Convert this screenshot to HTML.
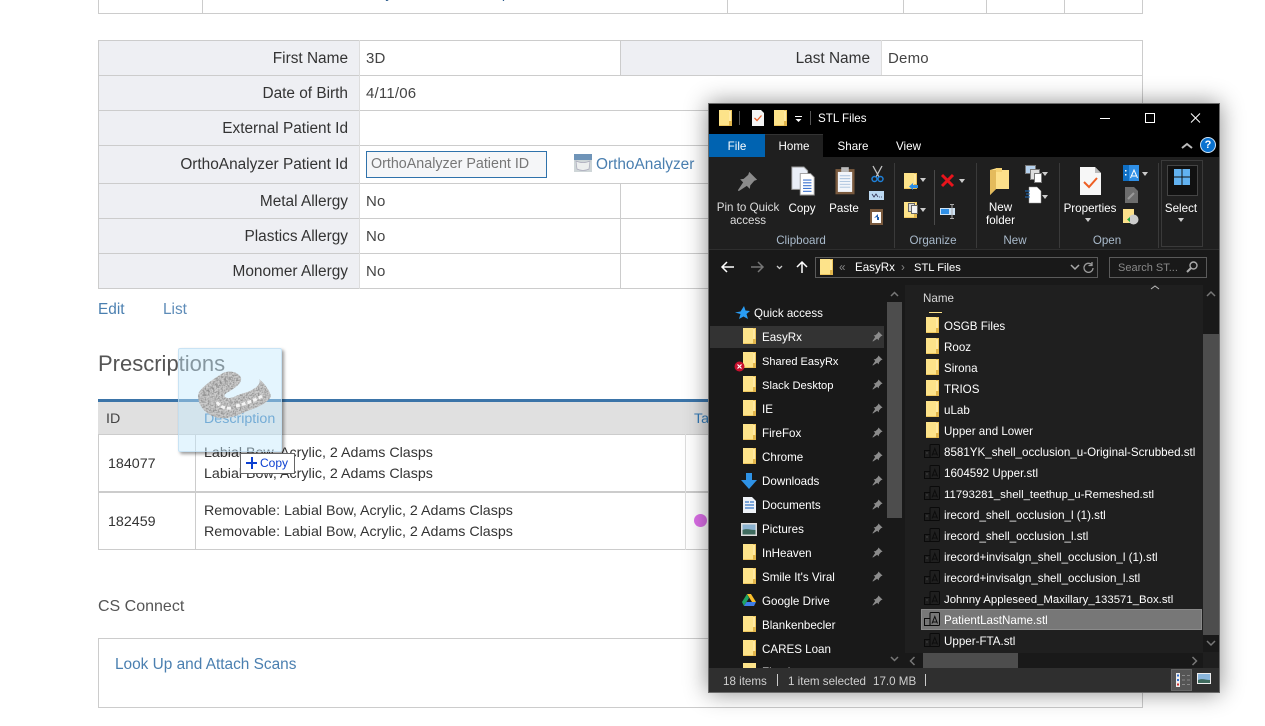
<!DOCTYPE html>
<html><head><meta charset="utf-8"><title>Patient</title>
<style>
html,body{margin:0;padding:0;background:#fff;overflow:hidden}
body{width:1265px;height:726px;position:relative;font-family:"Liberation Sans",sans-serif;color:#333}
#p>div,#w>div{position:absolute}
.b{background:#ccc}
.l{font-size:15.4px;line-height:20px;height:20px;text-align:right;width:340px;left:8px;white-space:nowrap}
.v{font-size:15px;line-height:20px;height:20px;white-space:nowrap;color:#444;letter-spacing:.2px}
.d{font-size:14.26px;line-height:20px;height:20px;white-space:nowrap;color:#333}
.a{color:#337ab7}
#w{position:absolute;left:708px;top:103px;width:512px;height:590px;background:#000;box-shadow:0 0 22px rgba(0,0,0,.45);outline:1px solid #6b6b6b;outline-offset:-1px;font-size:11.6px;color:#fff;overflow:hidden}
#w>div{white-space:nowrap;line-height:16px;height:16px}
#w svg{position:absolute;overflow:visible}
#w svg.pn{left:164px}
.c{text-align:center}
.g{color:#a9bacb;text-align:center;margin-top:1px}
.n{left:54px;margin-top:1px}
.m{margin-top:1px}
.f{left:236px;margin-top:1px}
</style></head><body>
<svg width="0" height="0" style="position:absolute">
<defs>
<symbol id="fo" viewBox="0 0 13 16"><rect width="13" height="16" fill="#efc75e"/><rect x="1" y="1" width="11" height="14" fill="#ffe9a3"/><rect x="0" y="0" width="10" height="15" fill="#fde38a"/><rect x="10" y="11" width="3" height="5" fill="#e2b64c"/></symbol>
<symbol id="pi" viewBox="0 0 12 12"><path d="M7 0.5l4.500 4.500-1.600.6-2.300 2.600-.3 2-1.700-1.700L1 11.500l-.5-.5 3-4.500-1.700-1.700 2-.3 2.600-2.300z" fill="#8b8b8b"/></symbol>
<symbol id="st" viewBox="0 0 16 14"><rect x=".5" y="6.500" width="5.500" height="7" fill="none" stroke="#0a0a0a"/><rect x="6" y=".5" width="9.500" height="13" rx="1" fill="none" stroke="#0a0a0a"/><path d="M8 11.500L10.800 4.500 13.500 11.500M9 10h3.600" fill="none" stroke="#0c0c0c"/><rect x="2.500" y="8.500" width="1" height="1" fill="#666"/></symbol>
<filter id="nz" x="0" y="0" width="100%" height="100%"><feTurbulence type="fractalNoise" baseFrequency="0.6" numOctaves="2" seed="4"/><feColorMatrix values="0 0 0 0 .3 0 0 0 0 .3 0 0 0 0 .3 3 0 0 0 -1.100"/><feComposite in2="SourceGraphic" operator="in"/><feMerge><feMergeNode in="SourceGraphic"/><feMergeNode/></feMerge></filter>
</defs></svg>

<div id="p">
<!-- top table -->
<div class="b" style="left:98px;top:13px;width:1045px;height:1px"></div>
<div class="b" style="left:98px;top:0;width:1px;height:13px"></div>
<div class="b" style="left:202px;top:0;width:1px;height:13px"></div>
<div class="b" style="left:727px;top:0;width:1px;height:13px"></div>
<div class="b" style="left:903px;top:0;width:1px;height:13px"></div>
<div class="b" style="left:986px;top:0;width:1px;height:13px"></div>
<div class="b" style="left:1064px;top:0;width:1px;height:13px"></div>
<div class="b" style="left:1142px;top:0;width:1px;height:13px"></div>
<div class="d" style="left:288px;top:-16px;color:#2f5f8f">Labial Bow, Acrylic, 2 Adams Clasps</div>

<!-- details table -->
<div style="left:99px;top:41px;width:260px;height:247px;background:#eeeff3"></div>
<div style="left:621px;top:41px;width:260px;height:34px;background:#eeeff3"></div>
<div class="b" style="left:98px;top:40px;width:1045px;height:1px"></div>
<div class="b" style="left:98px;top:75px;width:1045px;height:1px"></div>
<div class="b" style="left:98px;top:110px;width:1045px;height:1px"></div>
<div class="b" style="left:98px;top:145px;width:1045px;height:1px"></div>
<div class="b" style="left:98px;top:183px;width:1045px;height:1px"></div>
<div class="b" style="left:98px;top:218px;width:1045px;height:1px"></div>
<div class="b" style="left:98px;top:253px;width:1045px;height:1px"></div>
<div class="b" style="left:98px;top:288px;width:1045px;height:1px"></div>
<div class="b" style="left:98px;top:40px;width:1px;height:249px"></div>
<div class="b" style="left:359px;top:40px;width:1px;height:249px;background:#ddd"></div>
<div class="b" style="left:620px;top:40px;width:1px;height:35px"></div>
<div class="b" style="left:620px;top:183px;width:1px;height:105px"></div>
<div class="b" style="left:881px;top:40px;width:1px;height:35px;background:#ddd"></div>
<div class="b" style="left:1142px;top:40px;width:1px;height:249px"></div>

<div class="l" style="top:49px">First Name</div>
<div class="l" style="top:84px">Date of Birth</div>
<div class="l" style="top:119px">External Patient Id</div>
<div class="l" style="top:155px">OrthoAnalyzer Patient Id</div>
<div class="l" style="top:192px">Metal Allergy</div>
<div class="l" style="top:227px">Plastics Allergy</div>
<div class="l" style="top:262px">Monomer Allergy</div>
<div class="l" style="top:49px;left:530px">Last Name</div>
<div class="v" style="left:366px;top:49px">3D</div>
<div class="v" style="left:888px;top:49px">Demo</div>
<div class="v" style="left:366px;top:84px">4/11/06</div>
<div class="v" style="left:366px;top:192px">No</div>
<div class="v" style="left:366px;top:227px">No</div>
<div class="v" style="left:366px;top:262px">No</div>

<div style="left:366px;top:151px;width:179px;height:25px;border:1px solid #2f72ab;background:#f5f6f8;color:#777;font-size:14.3px;line-height:25px;text-indent:4px;white-space:nowrap">OrthoAnalyzer Patient ID</div>
<svg style="position:absolute;left:574px;top:154px" width="18" height="18" viewBox="0 0 18 18"><rect width="18" height="18" fill="#cfd6d8"/><rect width="18" height="6" fill="#6f94b8"/><path d="M2 7c4 2 10 2 14 0l-1 8c-4 2-8 2-12 0z" fill="#eceeee" stroke="#aab" stroke-width=".7"/></svg>
<div class="a" style="left:596px;top:155px;font-size:15.4px;line-height:20px;white-space:nowrap;color:#4a7fb0">OrthoAnalyzer</div>

<div class="a" style="left:98px;top:300px;font-size:15.4px;line-height:20px;color:#4a7fb0">Edit</div>
<div class="a" style="left:163px;top:300px;font-size:15.4px;line-height:20px;color:#5e8cb8">List</div>

<div style="left:98px;top:350px;font-size:22px;line-height:28px;color:#555;white-space:nowrap">Prescriptions</div>

<!-- prescriptions -->
<div style="left:98px;top:399px;width:612px;height:3px;background:#3b74a8"></div>
<div style="left:98px;top:402px;width:612px;height:32px;background:#e0e0e0"></div>
<div class="d" style="left:106px;top:409px;color:#444">ID</div>
<div class="d a" style="left:204px;top:409px">Description</div>
<div class="d a" style="left:694px;top:409px">Ta</div>
<div class="b" style="left:98px;top:434px;width:612px;height:1px"></div>
<div class="b" style="left:98px;top:491px;width:612px;height:2px"></div>
<div class="b" style="left:98px;top:549px;width:612px;height:1px"></div>
<div class="b" style="left:98px;top:434px;width:1px;height:116px"></div>
<div class="b" style="left:195px;top:434px;width:1px;height:116px"></div>
<div class="b" style="left:685px;top:434px;width:1px;height:116px;background:#ddd"></div>
<div class="d" style="left:108px;top:454px">184077</div>
<div class="d" style="left:204px;top:443px">Labial Bow, Acrylic, 2 Adams Clasps</div>
<div class="d" style="left:204px;top:464px">Labial Bow, Acrylic, 2 Adams Clasps</div>
<div class="d" style="left:108px;top:512px">182459</div>
<div class="d" style="left:204px;top:501px">Removable: Labial Bow, Acrylic, 2 Adams Clasps</div>
<div class="d" style="left:204px;top:522px">Removable: Labial Bow, Acrylic, 2 Adams Clasps</div>
<div style="left:694px;top:514px;width:13px;height:13px;border-radius:50%;background:#dc6fe8"></div>

<div style="left:98px;top:597px;font-size:16px;line-height:20px;color:#555;white-space:nowrap">CS Connect</div>
<div style="left:98px;top:638px;width:1043px;height:68px;border:1px solid #ccc"></div>
<div class="a" style="left:115px;top:655px;font-size:15.4px;line-height:20px;white-space:nowrap;color:#4a7fb0">Look Up and Attach Scans</div>

<!-- drag ghost -->
<div style="left:178px;top:348px;width:102px;height:102px;background:rgba(196,232,252,.45);border:1px solid rgba(190,220,240,.7);border-radius:2px;box-shadow:2px 2px 3px rgba(0,0,0,.4)"></div>
<svg style="position:absolute;left:190px;top:365px" width="85" height="65" viewBox="0 0 85 65">
<path d="M33 8C39 5 49 7 51 13 52 18 46 22 40 26 36 28 33 30 35 32 38 34 42 33 46 31 50 29 55 28 60 26 64 24 67 22 69 19 70 17 70 15 69 14 73 17 79 24 81 31 78 38 68 42 60 45 52 48 45 52 37 53 28 54 19 51 13 44 9 39 7 33 9 27 14 20 25 13 33 8Z" fill="#cdcdcd" filter="url(#nz)"/>
<path d="M27 37c3 5 9 7 14 6M46 41c8-2 18-5 26-10" fill="none" stroke="#f4f4f4" stroke-width="3" stroke-dasharray="4 2"/>
<path d="M14 30C22 22 32 16 44 12" fill="none" stroke="#8a8a8a" stroke-width="3" stroke-dasharray="2 3" opacity=".7"/>
</svg>
<div style="left:240px;top:453px;width:53px;height:19px;background:#fff;border:1px solid #666;color:#0b3fd0;font-size:12px;line-height:19px;text-indent:19px">Copy</div>
<div style="left:246px;top:462px;width:11px;height:2px;background:#0b3fd0"></div>
<div style="left:250.500px;top:457px;width:2px;height:12px;background:#0b3fd0"></div>
</div>

<!-- explorer; coordinates relative to window: x-708, y-103 -->
<div id="w">
<div style="left:1px;top:31px;width:510px;height:23px;background:#000"></div>
<svg style="left:11px;top:7px" width="13" height="16"><use href="#fo"/></svg>
<div style="left:31px;top:8px;width:1px;height:14px;background:#555"></div>
<svg style="left:44px;top:7px" width="12" height="16" viewBox="0 0 12 16"><path d="M0 0h9l3 3v13H0z" fill="#f4f4f4"/><path d="M2.500 8l2.500 2.500 4.500-5" fill="none" stroke="#e8622c" stroke-width="1.300"/></svg>
<svg style="left:66px;top:7px" width="13" height="16"><use href="#fo"/></svg>
<svg style="left:86px;top:12px" width="9" height="9" viewBox="0 0 9 9"><path d="M1 1.500h7" stroke="#fff"/><path d="M1.500 4h6l-3 3z" fill="#fff"/></svg>
<div style="left:102px;top:8px;width:1px;height:14px;background:#555"></div>
<div class="m" style="left:110px;top:7px">STL Files</div>
<svg style="left:392px;top:10px" width="110" height="12" viewBox="0 0 110 12"><path d="M0 5.500h10" stroke="#fff"/><rect x="45.500" y=".5" width="9" height="9" fill="none" stroke="#fff"/><path d="M91 .5l9 9m0-9l-9 9" stroke="#fff"/></svg>

<div style="left:1px;top:31px;width:56px;height:23px;background:#0063b1;line-height:25px;text-align:center">File</div>
<div style="left:57px;top:31px;width:58px;height:23px;background:#1f1f1f;line-height:25px;text-align:center;box-shadow:inset 0 1px #333">Home</div>
<div style="left:115px;top:31px;width:60px;height:23px;line-height:25px;text-align:center">Share</div>
<div style="left:175px;top:31px;width:51px;height:23px;line-height:25px;text-align:center">View</div>
<svg style="left:473px;top:37px" width="36" height="16" viewBox="0 0 36 16"><path d="M1 8l5-4 5 4" fill="none" stroke="#bbb" stroke-width="2"/><circle cx="27" cy="5" r="7.500" fill="#0a72d0" stroke="#cfe3f5"/></svg>
<div style="left:495px;top:34px;width:10px;font-size:11px;font-weight:bold;text-align:center">?</div>

<!-- ribbon -->
<div style="left:1px;top:54px;width:510px;height:92px;background:#1f1f1f"></div>
<div style="left:1px;top:146px;width:510px;height:1px;background:#2e2e2e"></div>
<div style="left:186px;top:60px;width:1px;height:85px;background:#3a3a3a"></div>
<div style="left:268px;top:60px;width:1px;height:85px;background:#3a3a3a"></div>
<div style="left:226px;top:67px;width:1px;height:55px;background:#4a4a4a"></div>
<div style="left:351px;top:60px;width:1px;height:85px;background:#3a3a3a"></div>
<div style="left:450px;top:60px;width:1px;height:85px;background:#3a3a3a"></div>
<div style="left:453px;top:57px;width:40px;height:85px;border:1px solid #3a3a3a"></div>
<div style="left:459px;top:62px;width:29px;height:29px;border:1px solid #444;background:#111"></div>
<svg style="left:466px;top:66px" width="16" height="16" viewBox="0 0 16 16"><path d="M0 0h7.500v7.500H0zM8.500 0H16v7.500H8.500zM0 8.500h7.500V16H0zM8.500 8.500H16V16H8.500z" fill="#62b2f0"/></svg>

<svg style="left:29px;top:68px" width="21" height="21" viewBox="0 0 12 12"><use href="#pi" width="12" height="12"/></svg>
<svg style="left:83px;top:64px" width="25" height="28" viewBox="0 0 25 30"><path d="M0 0h13l4 4v20H0z" fill="#e9eef7" stroke="#9a9a9a"/><path d="M9 7h11l4 4v19H9z" fill="#fff" stroke="#9a9a9a"/><path d="M12 14h9M12 17h9M12 20h9M12 23h9M12 26h9" stroke="#3e74cf" stroke-width="1.200"/></svg>
<svg style="left:127px;top:63px" width="20" height="29" viewBox="0 0 21 30"><rect x=".5" y="3" width="20" height="26.500" fill="#7a5a3e"/><rect x="3" y="6" width="15" height="21" fill="#f2f5fa"/><path d="M5 10h11M5 13h11M5 16h11M5 19h11M5 22h11" stroke="#a9c2dc"/><rect x="6.500" y="1" width="8" height="5" fill="#bbb"/></svg>
<svg style="left:163px;top:63px" width="13" height="16" viewBox="0 0 13 16"><path d="M2 0l6 11M11 0L5 11" stroke="#c4c4c4" stroke-width="1.300"/><circle cx="3.500" cy="13" r="2.500" fill="none" stroke="#1f7fd6" stroke-width="1.500"/><circle cx="9.500" cy="13" r="2.500" fill="none" stroke="#1f7fd6" stroke-width="1.500"/></svg>
<svg style="left:161px;top:88px" width="15" height="9" viewBox="0 0 15 9"><rect width="15" height="9" fill="#bcd9f2"/><path d="M3 3l2 3 2-3 2 3M10 6h1M12 6h1" fill="none" stroke="#335" stroke-width=".8"/></svg>
<svg style="left:162px;top:106px" width="13" height="16" viewBox="0 0 13 16"><rect width="13" height="16" fill="#7a5a3e"/><rect x="2" y="3" width="9" height="11" fill="#fff"/><path d="M4 9l4-4v3h1v3H7V8z" fill="#1f5fb0"/></svg>

<svg style="left:196px;top:70px" width="13" height="16"><use href="#fo"/></svg>
<svg style="left:201px;top:80px" width="9" height="7" viewBox="0 0 9 7"><path d="M0 3.500L4 0v2h5v3H4v2z" fill="#2f8fe6"/></svg>
<div style="left:212px;top:75px;width:0;height:0;border:3px solid transparent;border-top:4px solid #ccc;line-height:0"></div>
<svg style="left:196px;top:99px" width="13" height="16"><use href="#fo"/></svg>
<svg style="left:200px;top:100px" width="10" height="11" viewBox="0 0 10 11"><rect x=".5" y=".5" width="6" height="8" fill="#ddd" stroke="#666"/><rect x="3.500" y="2.500" width="6" height="8" fill="#f4f4f4" stroke="#666"/></svg>
<div style="left:212px;top:105px;width:0;height:0;border:3px solid transparent;border-top:4px solid #ccc;line-height:0"></div>
<svg style="left:233px;top:71px" width="13" height="13" viewBox="0 0 13 13"><path d="M1 1l11 11M12 1L1 12" stroke="#e8141c" stroke-width="3"/></svg>
<div style="left:251px;top:76px;width:0;height:0;border:3px solid transparent;border-top:4px solid #ccc;line-height:0"></div>
<svg style="left:232px;top:101px" width="16" height="15" viewBox="0 0 16 15"><rect x="0" y="4" width="15" height="7" fill="#cfe3f5"/><rect x="1" y="5" width="8" height="5" fill="#2f8fe6"/><path d="M12 0v15M10 .5h4M10 14.500h4" stroke="#aaa"/></svg>

<svg style="left:282px;top:65px" width="19" height="27" viewBox="0 0 19 27"><path d="M0 2l7-2h5v2h7v19H6l-6 6z" fill="#fde08a"/><path d="M0 2v25l6-6V2z" fill="#e4bb5c"/><path d="M6 0h6v4H6z" fill="#f5d274"/></svg>
<svg style="left:317px;top:62px" width="24" height="20" viewBox="0 0 24 20"><rect x=".5" y=".5" width="10" height="8" fill="#b6d2ee" stroke="#777"/><rect x="5.500" y="4.500" width="9" height="10" fill="#ddd" stroke="#777"/><rect x="9.500" y="8.500" width="7" height="9" fill="#fff" stroke="#777"/></svg>
<div style="left:334px;top:69px;width:0;height:0;border:3px solid transparent;border-top:4px solid #ccc;line-height:0"></div>
<svg style="left:317px;top:84px" width="16" height="16" viewBox="0 0 16 16"><path d="M4 0h8l4 4v12H4z" fill="#fff" stroke="#999" stroke-width=".5"/><path d="M0 4h5M1 7h4M0 10h5" stroke="#1f6fc0"/></svg>
<div style="left:334px;top:92px;width:0;height:0;border:3px solid transparent;border-top:4px solid #ccc;line-height:0"></div>

<svg style="left:372px;top:64px" width="21" height="28" viewBox="0 0 21 28"><path d="M0 0h15l6 6v22H0z" fill="#f7f7f7"/><path d="M15 0l6 6h-6z" fill="#bbb"/><path d="M4 15l5 5 8-9" fill="none" stroke="#ee5f24" stroke-width="2"/></svg>
<div style="left:415px;top:62px;width:16px;height:16px;background:#0f6fc4"></div>
<svg style="left:415px;top:62px" width="16" height="16" viewBox="0 0 16 16"><path d="M6 0h10v16H6z" fill="#2f8fe6"/><path d="M7.500 13L11 5l3.500 8M9 11h4" fill="none" stroke="#fff"/><rect x="2" y="5" width="1.500" height="1.500" fill="#fff"/><rect x="2" y="9" width="1.500" height="1.500" fill="#fff"/></svg>
<div style="left:434px;top:69px;width:0;height:0;border:3px solid transparent;border-top:4px solid #ccc;line-height:0"></div>
<svg style="left:417px;top:84px" width="13" height="16" viewBox="0 0 13 16"><path d="M0 0h9l4 4v12H0z" fill="#6d6d6d"/><path d="M3 12l6-6" stroke="#999" stroke-width="2"/></svg>
<svg style="left:415px;top:106px" width="16" height="16" viewBox="0 0 16 16"><rect width="11" height="14" fill="#fbe08a"/><circle cx="10.500" cy="10.500" r="5" fill="#ccc"/><path d="M4 10.500l3-2.500v5z" fill="#26a63c"/></svg>

<div class="c" style="left:0;top:98px;width:80px;line-height:13px;height:26px;white-space:normal;color:#ddd">Pin to Quick<br>access</div>
<div class="c" style="left:74px;top:98px;width:40px">Copy</div>
<div class="c" style="left:116px;top:98px;width:40px">Paste</div>
<div class="c" style="left:270px;top:98px;width:45px;line-height:13px;height:26px;white-space:normal">New<br>folder</div>
<div class="c" style="left:352px;top:98px;width:60px">Properties</div>
<div style="left:377px;top:115px;width:0;height:0;border:3px solid transparent;border-top:4px solid #ccc;line-height:0"></div>
<div class="c" style="left:453px;top:98px;width:40px">Select</div>
<div style="left:470px;top:115px;width:0;height:0;border:3px solid transparent;border-top:4px solid #ccc;line-height:0"></div>
<div class="g" style="left:50px;top:129px;width:86px">Clipboard</div>
<div class="g" style="left:195px;top:129px;width:60px">Organize</div>
<div class="g" style="left:287px;top:129px;width:40px">New</div>
<div class="g" style="left:370px;top:129px;width:58px">Open</div>

<!-- address row -->
<div style="left:1px;top:147px;width:510px;height:35px;background:#191919"></div>
<svg style="left:13px;top:157px" width="90" height="14" viewBox="0 0 90 14"><path d="M1 7h12M6 2L1 7l5 5" fill="none" stroke="#fff" stroke-width="1.500"/><path d="M30 7h12M37 2l5 5-5 5" fill="none" stroke="#777" stroke-width="1.500"/><path d="M56 6l2.500 2.500L61 6" fill="none" stroke="#ccc" stroke-width="1.300"/><path d="M81 13V2M76 7l5-5 5 5" fill="none" stroke="#fff" stroke-width="1.500"/></svg>
<div style="left:107px;top:154px;width:281px;height:19px;border:1px solid #5a5a5a"></div>
<svg style="left:112px;top:156px" width="13" height="16"><use href="#fo"/></svg>
<div class="m" style="left:131px;top:156px;color:#888">«</div>
<div class="m" style="left:147px;top:156px">EasyRx</div>
<div class="m" style="left:193px;top:156px;color:#888">›</div>
<div class="m" style="left:206px;top:156px;font-size:11.2px">STL Files</div>
<svg style="left:362px;top:159px" width="25" height="12" viewBox="0 0 25 12"><path d="M1 3l4 4 4-4" fill="none" stroke="#aaa" stroke-width="1.500"/><path d="M22 3a4.500 4.500 0 1 0 1 3M22 0v3.500h-3.500" fill="none" stroke="#999" stroke-width="1.300"/></svg>
<div style="left:401px;top:154px;width:96px;height:19px;border:1px solid #5a5a5a"></div>
<div class="m" style="left:410px;top:156px;color:#888;font-size:11px">Search ST...</div>
<svg style="left:478px;top:158px" width="12" height="12" viewBox="0 0 12 12"><circle cx="7.500" cy="4.500" r="3.500" fill="none" stroke="#aaa" stroke-width="1.400"/><path d="M5 7l-4 4" stroke="#aaa" stroke-width="2"/></svg>

<!-- nav -->
<div style="left:1px;top:182px;width:194px;height:383px;background:#191919"></div>
<div style="left:2px;top:223px;width:174px;height:22px;background:#333"></div>
<div style="left:179px;top:182px;width:15px;height:383px;background:#191919"></div>
<div style="left:179px;top:199px;width:15px;height:216px;background:#4d4d4d"></div>
<svg style="left:182px;top:188px" width="9" height="6"><path d="M1 5l3.500-3.500L8 5" fill="none" stroke="#777" stroke-width="1.500"/></svg>
<svg style="left:182px;top:553px" width="9" height="6"><path d="M1 1l3.500 3.500L8 1" fill="none" stroke="#777" stroke-width="1.500"/></svg>
<svg style="left:27px;top:203px" width="15" height="14" viewBox="0 0 15 14"><path d="M9 0l1.500 4.500L15 5l-3.500 3L13 13 8.500 10.500 4 13l1.500-5L0 6.500l5.500-1z" fill="#2a9df4"/></svg>
<div class="m" style="left:46px;top:202px">Quick access</div>
<div class="n" style="top:226px">EasyRx</div>
<div class="n" style="top:250px;font-size:11px">Shared EasyRx</div>
<div class="n" style="top:274px;font-size:11.2px">Slack Desktop</div>
<div class="n" style="top:298px">IE</div>
<div class="n" style="top:322px">FireFox</div>
<div class="n" style="top:346px">Chrome</div>
<div class="n" style="top:370px">Downloads</div>
<div class="n" style="top:394px">Documents</div>
<div class="n" style="top:418px">Pictures</div>
<div class="n" style="top:442px">InHeaven</div>
<div class="n" style="top:466px">Smile It's Viral</div>
<div class="n" style="top:490px">Google Drive</div>
<div class="n" style="top:514px">Blankenbecler</div>
<div class="n" style="top:538px">CARES Loan</div>
<div class="n" style="top:561px">Fixed</div>
<svg style="left:35px;top:225px" width="13" height="16"><use href="#fo"/></svg>
<svg style="left:35px;top:249px" width="13" height="16"><use href="#fo"/></svg>
<svg style="left:26px;top:258px" width="11" height="11" viewBox="0 0 11 11"><circle cx="5.500" cy="5.500" r="5" fill="#c8102e"/><path d="M3.500 3.500l4 4m0-4l-4 4" stroke="#fff" stroke-width="1.200"/></svg>
<svg style="left:35px;top:273px" width="13" height="16"><use href="#fo"/></svg>
<svg style="left:35px;top:297px" width="13" height="16"><use href="#fo"/></svg>
<svg style="left:35px;top:321px" width="13" height="16"><use href="#fo"/></svg>
<svg style="left:35px;top:345px" width="13" height="16"><use href="#fo"/></svg>
<svg style="left:33px;top:370px" width="16" height="16" viewBox="0 0 16 16"><path d="M5 0h6v7h5l-8 9-8-9h5z" fill="#2e92e6"/></svg>
<svg style="left:35px;top:394px" width="13" height="16" viewBox="0 0 13 16"><path d="M0 0h9l4 4v12H0z" fill="#eef2f7"/><path d="M2 5h4M7 5h4M2 8h9M2 11h9" stroke="#3779c9" stroke-width="1.300"/></svg>
<svg style="left:33px;top:420px" width="16" height="13" viewBox="0 0 16 13"><rect width="16" height="13" fill="#ddd"/><rect x="1.500" y="1.500" width="13" height="10" fill="#8bb2d0"/><path d="M1.500 7c4-2 8 0 13 0v4.500h-13z" fill="#3f6b5e"/></svg>
<svg style="left:35px;top:441px" width="13" height="16"><use href="#fo"/></svg>
<svg style="left:35px;top:465px" width="13" height="16"><use href="#fo"/></svg>
<svg style="left:34px;top:491px" width="14" height="13" viewBox="0 0 14 13"><path d="M5 0h4l5 8H10z" fill="#fbc02d"/><path d="M5 0L0 8l2 4 5-8z" fill="#1fa463"/><path d="M2 12l2.500-4H14l-2 4z" fill="#3f7ee8"/></svg>
<svg style="left:35px;top:513px" width="13" height="16"><use href="#fo"/></svg>
<svg style="left:35px;top:537px" width="13" height="16"><use href="#fo"/></svg>
<svg style="left:35px;top:560px" width="13" height="5" viewBox="0 0 13 5"><rect width="13" height="5" fill="#fde38a"/></svg>
<svg class="pn" style="top:228px" width="11" height="11" viewBox="0 0 12 12"><use href="#pi" width="12" height="12"/></svg>
<svg class="pn" style="top:252px" width="11" height="11" viewBox="0 0 12 12"><use href="#pi" width="12" height="12"/></svg>
<svg class="pn" style="top:276px" width="11" height="11" viewBox="0 0 12 12"><use href="#pi" width="12" height="12"/></svg>
<svg class="pn" style="top:300px" width="11" height="11" viewBox="0 0 12 12"><use href="#pi" width="12" height="12"/></svg>
<svg class="pn" style="top:324px" width="11" height="11" viewBox="0 0 12 12"><use href="#pi" width="12" height="12"/></svg>
<svg class="pn" style="top:348px" width="11" height="11" viewBox="0 0 12 12"><use href="#pi" width="12" height="12"/></svg>
<svg class="pn" style="top:372px" width="11" height="11" viewBox="0 0 12 12"><use href="#pi" width="12" height="12"/></svg>
<svg class="pn" style="top:396px" width="11" height="11" viewBox="0 0 12 12"><use href="#pi" width="12" height="12"/></svg>
<svg class="pn" style="top:420px" width="11" height="11" viewBox="0 0 12 12"><use href="#pi" width="12" height="12"/></svg>
<svg class="pn" style="top:444px" width="11" height="11" viewBox="0 0 12 12"><use href="#pi" width="12" height="12"/></svg>
<svg class="pn" style="top:468px" width="11" height="11" viewBox="0 0 12 12"><use href="#pi" width="12" height="12"/></svg>
<svg class="pn" style="top:492px" width="11" height="11" viewBox="0 0 12 12"><use href="#pi" width="12" height="12"/></svg>

<!-- file list -->
<div style="left:197px;top:182px;width:314px;height:383px;background:#1f1f1f"></div>
<div style="left:195px;top:182px;width:2px;height:383px;background:#191919"></div>
<div class="m" style="left:215px;top:187px;color:#d8d8d8">Name</div>
<svg style="left:442px;top:182px" width="10" height="5"><path d="M1 4l4-3 4 3" fill="none" stroke="#bbb"/></svg>
<div style="left:221px;top:209px;width:13px;height:1px;background:#fde38a"></div>
<div style="left:213px;top:506px;width:281px;height:21px;background:#777;box-shadow:inset 0 0 0 1px #8a8a8a"></div>
<svg style="left:218px;top:214px" width="13" height="16"><use href="#fo"/></svg>
<svg style="left:218px;top:235px" width="13" height="16"><use href="#fo"/></svg>
<svg style="left:218px;top:256px" width="13" height="16"><use href="#fo"/></svg>
<svg style="left:218px;top:277px" width="13" height="16"><use href="#fo"/></svg>
<svg style="left:218px;top:298px" width="13" height="16"><use href="#fo"/></svg>
<svg style="left:218px;top:319px" width="13" height="16"><use href="#fo"/></svg>
<svg style="left:216px;top:341px" width="16" height="14"><use href="#st"/></svg>
<svg style="left:216px;top:362px" width="16" height="14"><use href="#st"/></svg>
<svg style="left:216px;top:383px" width="16" height="14"><use href="#st"/></svg>
<svg style="left:216px;top:404px" width="16" height="14"><use href="#st"/></svg>
<svg style="left:216px;top:425px" width="16" height="14"><use href="#st"/></svg>
<svg style="left:216px;top:446px" width="16" height="14"><use href="#st"/></svg>
<svg style="left:216px;top:467px" width="16" height="14"><use href="#st"/></svg>
<svg style="left:216px;top:488px" width="16" height="14"><use href="#st"/></svg>
<svg style="left:216px;top:509px" width="16" height="14"><use href="#st"/></svg>
<svg style="left:216px;top:530px" width="16" height="14"><use href="#st"/></svg>
<div class="f" style="top:215px">OSGB Files</div>
<div class="f" style="top:236px">Rooz</div>
<div class="f" style="top:257px">Sirona</div>
<div class="f" style="top:278px">TRIOS</div>
<div class="f" style="top:299px">uLab</div>
<div class="f" style="top:320px">Upper and Lower</div>
<div class="f" style="top:341px">8581YK_shell_occlusion_u-Original-Scrubbed.stl</div>
<div class="f" style="top:362px">1604592 Upper.stl</div>
<div class="f" style="top:383px;font-size:11.4px">11793281_shell_teethup_u-Remeshed.stl</div>
<div class="f" style="top:404px">irecord_shell_occlusion_l (1).stl</div>
<div class="f" style="top:425px">irecord_shell_occlusion_l.stl</div>
<div class="f" style="top:446px">irecord+invisalgn_shell_occlusion_l (1).stl</div>
<div class="f" style="top:467px">irecord+invisalgn_shell_occlusion_l.stl</div>
<div class="f" style="top:488px;font-size:11.4px">Johnny Appleseed_Maxillary_133571_Box.stl</div>
<div class="f" style="top:509px">PatientLastName.stl</div>
<div class="f" style="top:530px">Upper-FTA.stl</div>

<!-- right scrollbar -->
<div style="left:495px;top:182px;width:16px;height:367px;background:#191919"></div>
<div style="left:495px;top:231px;width:16px;height:301px;background:#4d4d4d"></div>
<svg style="left:498px;top:188px" width="10" height="6"><path d="M1 5l4-4 4 4" fill="none" stroke="#777" stroke-width="1.500"/></svg>
<svg style="left:498px;top:537px" width="10" height="6"><path d="M1 1l4 4 4-4" fill="none" stroke="#777" stroke-width="1.500"/></svg>
<!-- horizontal scrollbar -->
<div style="left:197px;top:549px;width:314px;height:16px;background:#1f1f1f"></div>
<div style="left:197px;top:550px;width:298px;height:15px;background:#191919"></div>
<div style="left:215px;top:550px;width:95px;height:15px;background:#4d4d4d"></div>
<svg style="left:201px;top:553px" width="7" height="10"><path d="M5.500 1l-4 4 4 4" fill="none" stroke="#777" stroke-width="1.500"/></svg>
<svg style="left:483px;top:553px" width="7" height="10"><path d="M1.500 1l4 4-4 4" fill="none" stroke="#777" stroke-width="1.500"/></svg>

<!-- status -->
<div style="left:1px;top:565px;width:510px;height:24px;background:#2f2f2f"></div>
<div class="m" style="left:15px;top:570px;color:#d0d0d0">18 items</div>
<div style="left:69px;top:571px;width:1px;height:12px;background:#ccc"></div>
<div class="m" style="left:80px;top:570px;color:#d0d0d0">1 item selected</div>
<div class="m" style="left:165px;top:570px;color:#d0d0d0">17.0 MB</div>
<div style="left:217px;top:571px;width:1px;height:12px;background:#ccc"></div>
<div style="left:463px;top:566px;width:21px;height:22px;background:#555;box-shadow:inset 0 0 0 1px #666"></div>
<svg style="left:468px;top:570px" width="14" height="14" viewBox="0 0 14 14"><rect x="0" y="0" width="4" height="14" fill="#eee"/><rect x="1" y="1.500" width="2" height="2" fill="#2f6fd0"/><rect x="1" y="6" width="2" height="2" fill="#2f6fd0"/><rect x="1" y="10.500" width="2" height="2" fill="#d02f2f"/><path d="M6 2.500h3M11 2.500h3M6 7h3M11 7h3M6 11.500h3M11 11.500h3" stroke="#888"/></svg>
<svg style="left:489px;top:570px" width="14" height="11" viewBox="0 0 14 11"><rect width="14" height="11" fill="#eee"/><rect x="1" y="1" width="12" height="9" fill="#8ab6dc"/><path d="M1 7c4-2 8 0 12 0v3H1z" fill="#3f6b5e"/></svg>
</div>
</body></html>
